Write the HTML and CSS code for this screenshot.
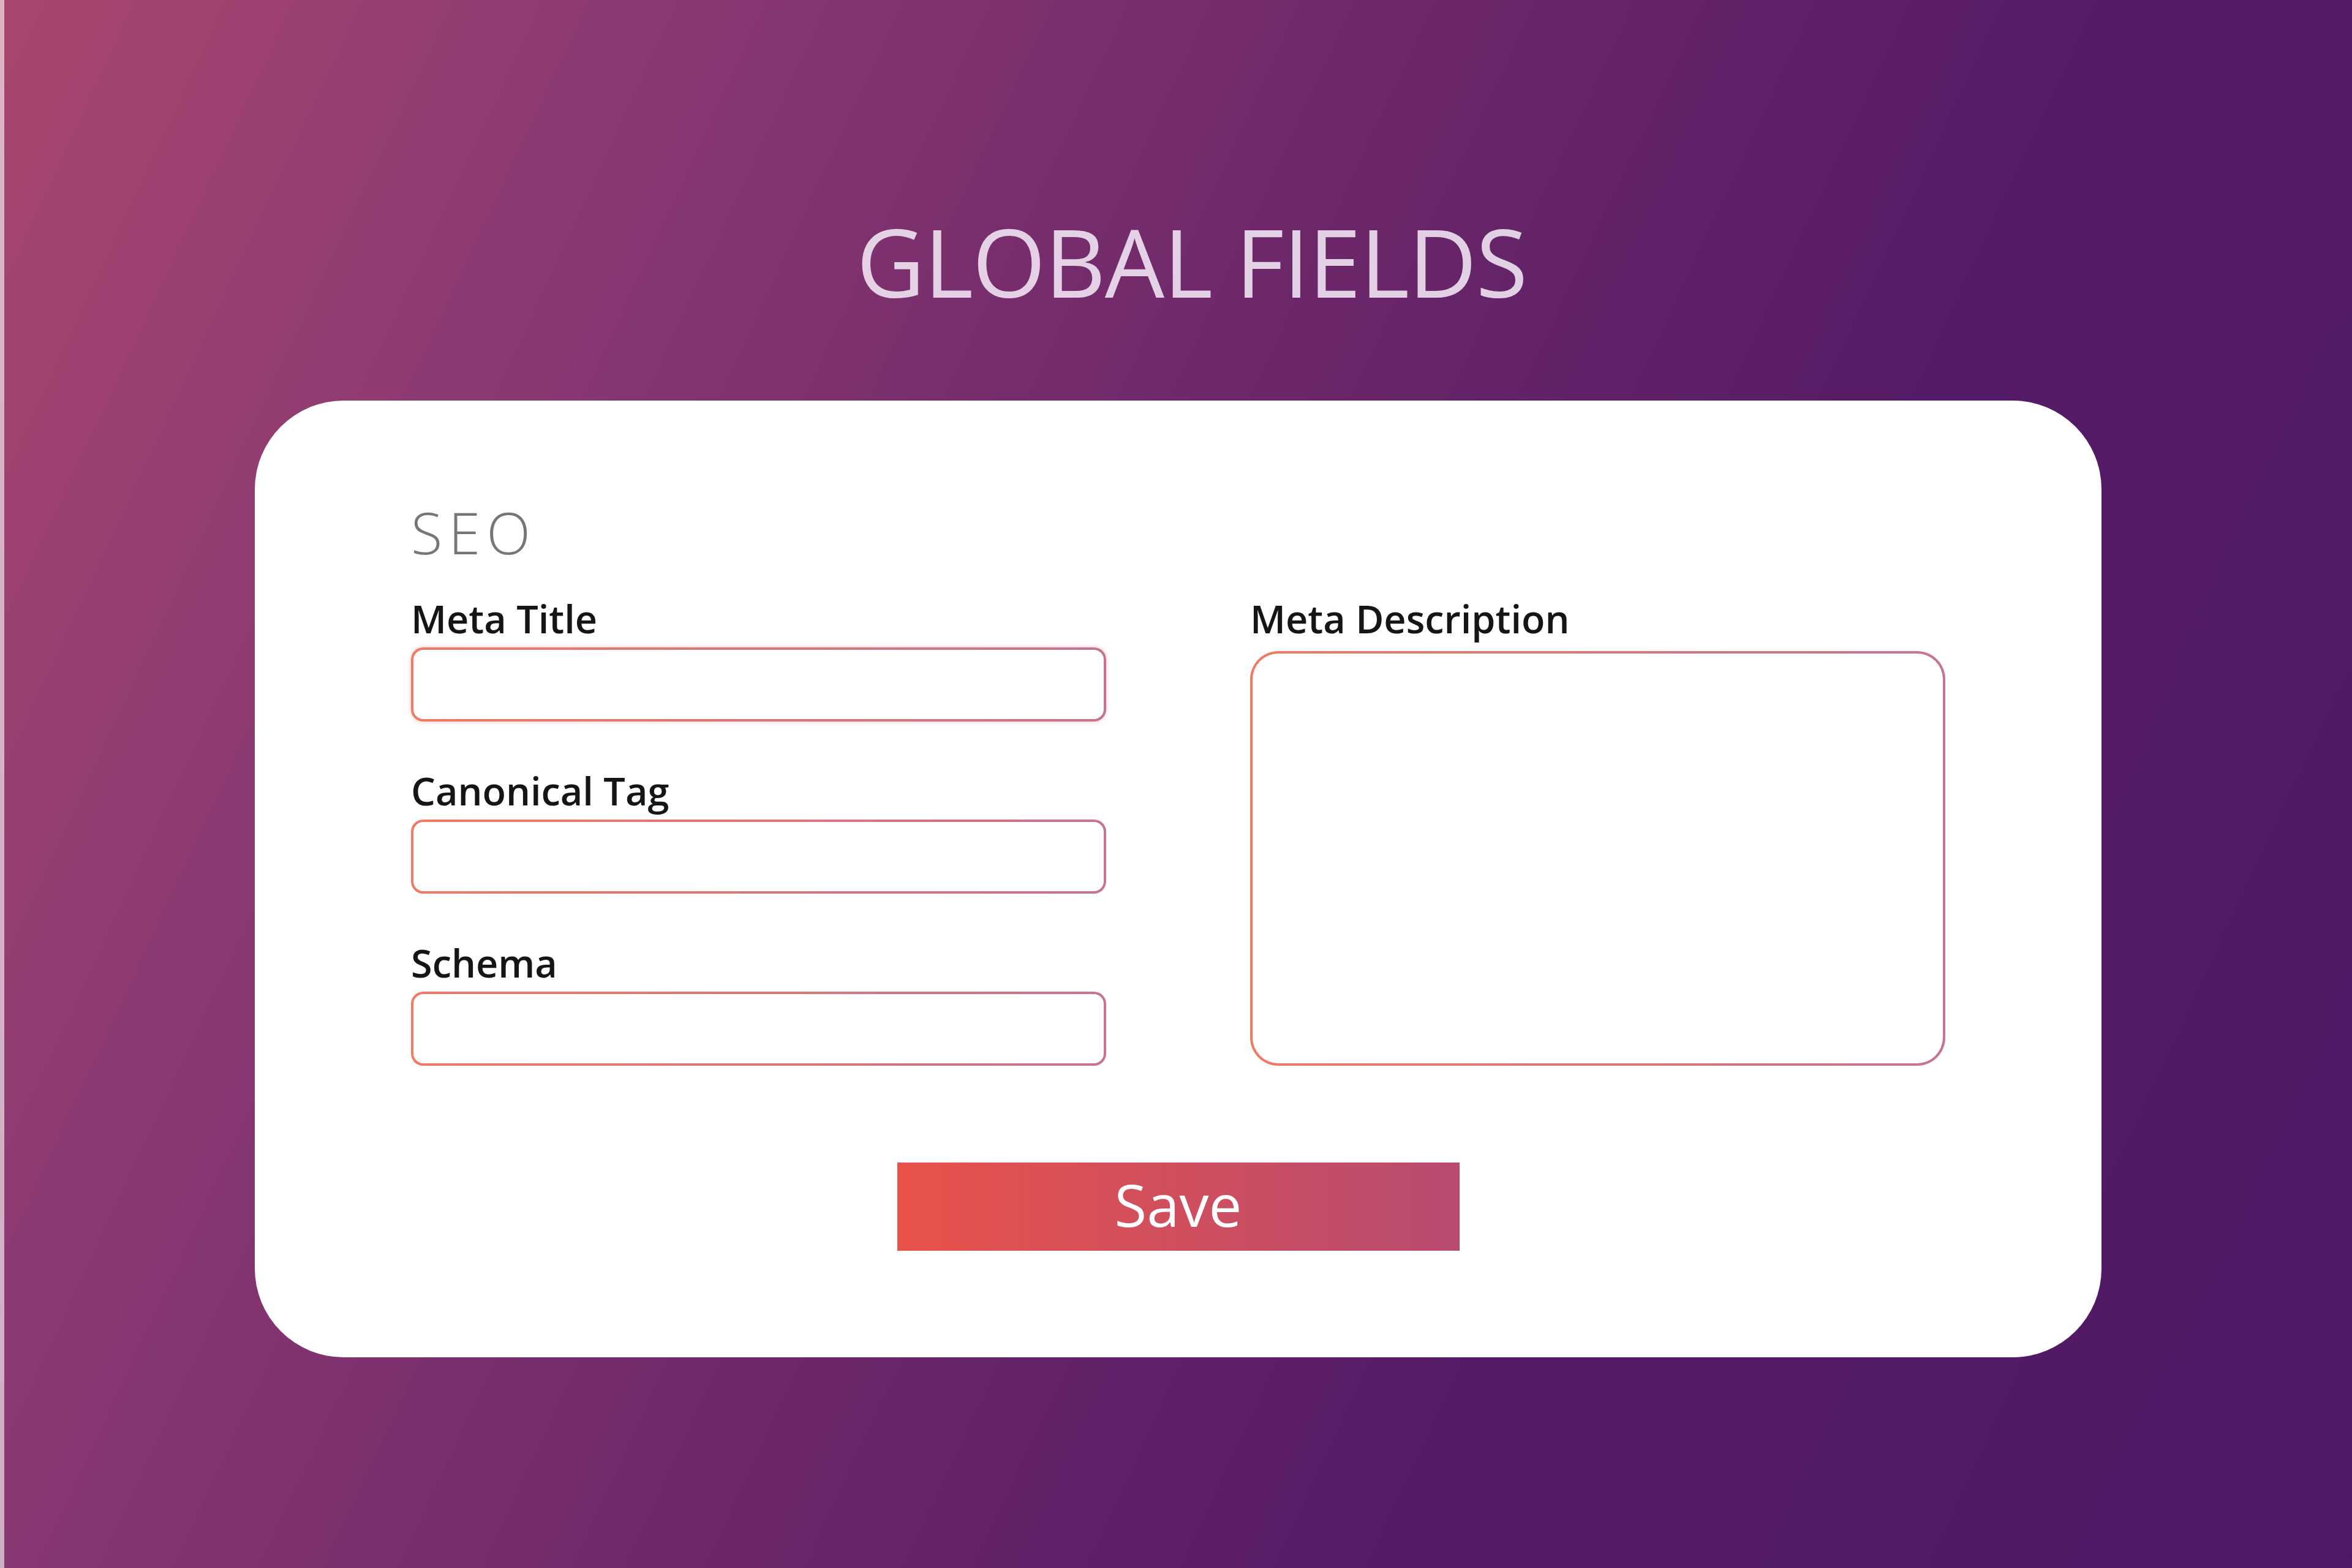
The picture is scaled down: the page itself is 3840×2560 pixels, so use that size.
FILE: index.html
```html
<!DOCTYPE html>
<html lang="en">
<head>
    <meta charset="UTF-8">
    <meta name="viewport" content="width=device-width, initial-scale=1.0">
    <title>Global Fields</title>
    <link rel="stylesheet" href="styles.css">
</head>
<body>
    <div class="page">
        <h1 class="page-title">GLOBAL FIELDS</h1>
        <div class="card">
            <h2 class="section-title">SEO</h2>
            <form class="fields">
                <div class="col">
                    <div class="field">
                        <label for="meta-title">Meta Title</label>
                        <input type="text" id="meta-title" class="box focused">
                    </div>
                    <div class="field">
                        <label for="canonical">Canonical Tag</label>
                        <input type="text" id="canonical" class="box">
                    </div>
                    <div class="field">
                        <label for="schema">Schema</label>
                        <input type="text" id="schema" class="box">
                    </div>
                </div>
                <div class="col">
                    <div class="field field-tall">
                        <label for="meta-desc">Meta Description</label>
                        <textarea id="meta-desc" class="box area"></textarea>
                    </div>
                </div>
            </form>
            <div class="actions">
                <button type="button" class="save-btn">Save</button>
            </div>
        </div>
    </div>
</body>
</html>
```

FILE: styles.css
```css
html, body {
    margin: 0;
    height: 100%;
}
body {
    font-family: "Open Sans", "Noto Sans", sans-serif;
    background: linear-gradient(115deg, #a8476f 0%, #8a3872 22%, #6a2669 48%, #561b66 68%, #4f1864 100%);
    border-left: 7px solid rgba(255, 255, 255, 0.6);
    box-sizing: border-box;
}
.page {
    display: flex;
    flex-direction: column;
    align-items: center;
    padding-top: 349px;
}
.page-title {
    margin: 0 0 151px 44px;
    font-size: 154px;
    line-height: 1;
    font-weight: 400;
    color: rgba(244, 232, 246, 0.88);
    letter-spacing: -1.5px;
}
.card {
    width: 3015px;
    box-sizing: border-box;
    background-color: #fff;
    border-radius: 145px;
    padding: 168px 255px 174px;
}
.section-title {
    margin: 0 0 61px;
    font-size: 94px;
    line-height: 1;
    font-weight: 300;
    color: #767676;
    letter-spacing: 10px;
}
.fields {
    display: grid;
    grid-template-columns: 1fr 1fr;
    column-gap: 235px;
}
.col {
    display: flex;
    flex-direction: column;
    gap: 80px;
}
.field {
    display: flex;
    flex-direction: column;
}
.field label {
    font-size: 63px;
    line-height: 66px;
    font-weight: 600;
    color: #151515;
    margin-bottom: 14px;
}
.box {
    height: 121px;
    box-sizing: border-box;
    border: 4px solid transparent;
    border-radius: 20px;
    background: linear-gradient(#fff, #fff) padding-box,
                linear-gradient(90deg, #f07a64, #c6748f) border-box;
    font: inherit;
    outline: none;
    margin: 0;
}
.focused {
    box-shadow: 0 0 6px rgba(238, 140, 130, 0.55);
}
.field-tall {
    height: 100%;
}
.field-tall label {
    margin-bottom: 20px;
}
.area {
    flex: 1;
    height: auto;
    border-radius: 46px;
    resize: none;
}
.actions {
    display: flex;
    justify-content: center;
    margin-top: 158px;
}
.save-btn {
    width: 918px;
    height: 144px;
    border: none;
    border-radius: 0;
    background: linear-gradient(90deg, #e9524a, #d24f5c 45%, #b84b70);
    color: #fff;
    font-family: "Open Sans", "Noto Sans", sans-serif;
    font-size: 96px;
    line-height: 1;
    padding: 0 0 8px;
}
```
